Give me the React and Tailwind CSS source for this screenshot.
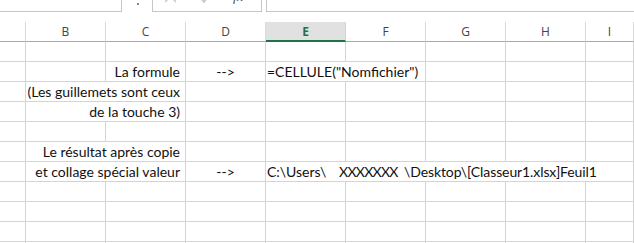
import React from "react";

const COLS = "grid grid-cols-[26px_80px_80px_80px_80px_80px_80px_80px_1fr]";
const LETTERS = ["", "B", "C", "D", "E", "F", "G", "H", "I"];

function Cell({ span = 1, align = "left", children }) {
  const spanCls =
    span === 2 ? "col-span-2" : span === 5 ? "col-span-5" : span === 3 ? "col-span-3" : "";
  const alignCls =
    align === "right" ? "text-right pr-[5px]" : align === "center" ? "text-center" : "text-left pl-[1px]";
  return (
    <div
      className={`${spanCls} ${alignCls} h-[20px] border-r border-b border-[#d4d4d4] text-[14px] leading-[19px] text-[#111] whitespace-nowrap overflow-visible`}
    >
      {children}
    </div>
  );
}

function EmptyRow() {
  return (
    <div className={COLS}>
      {LETTERS.map((l, i) => (
        <Cell key={i} />
      ))}
    </div>
  );
}

export default function App() {
  return (
    <div className="w-[634px] h-[243px] overflow-hidden bg-white font-['Lato','Liberation_Sans',sans-serif]">
      {/* formula bar remnants */}
      <div className="h-[22px] flex items-start">
        <div className="w-[122px] h-[12px] border-r border-b border-[#c6c6c6]" />
        <div className="w-[15px]" />
        <div className="w-[2px] h-[2px] mt-[3px] bg-[#8a8a8a]" />
        <div className="w-[13px]" />
        <div className="w-[110px] h-[12px] border-l border-r border-b border-[#c6c6c6] flex items-start overflow-hidden">
          <svg width="12" height="11" viewBox="0 0 12 11" className="ml-[12px]">
            <path d="M0 -9 L11 2 M11 -9 L0 2" stroke="#c4c4c4" strokeWidth="1.4" fill="none" />
          </svg>
          <svg width="12" height="11" viewBox="0 0 12 11" className="ml-[22px]">
            <path d="M-2 -6 L5 2 L14 -10" stroke="#c4c4c4" strokeWidth="1.6" fill="none" />
          </svg>
          <div className="ml-[22px] h-[11px] overflow-hidden">
            <div className="mt-[-11px] font-['Liberation_Serif',serif] italic text-[14px] leading-[16px] text-[#555]">
              fx
            </div>
          </div>
        </div>
        <div className="w-[4px]" />
        <div className="flex-1 h-[12px] border-l border-b border-[#c6c6c6]" />
      </div>

      {/* column headers */}
      <div className={COLS}>
        {LETTERS.map((l, i) =>
          l === "E" ? (
            <div
              key={i}
              className="h-[20px] bg-[#e1e1e1] border-b-2 border-b-[#217346] border-r border-r-[#d4d4d4] text-center text-[12px] leading-[19px] font-bold text-[#217346] font-['Open_Sans',sans-serif]"
            >
              E
            </div>
          ) : (
            <div
              key={i}
              className="h-[20px] border-b border-b-[#ababab] border-r border-r-[#dadada] text-center text-[12px] leading-[19px] text-[#444] font-['Open_Sans',sans-serif]"
            >
              {l}
            </div>
          )
        )}
      </div>

      {/* row 1 */}
      <EmptyRow />

      {/* row 2 */}
      <div className={COLS}>
        <Cell />
        <Cell />
        <Cell align="right">La formule</Cell>
        <Cell align="center">--&gt;</Cell>
        <Cell span={2}>=CELLULE("Nomfichier")</Cell>
        <Cell />
        <Cell />
        <Cell />
      </div>

      {/* row 3 */}
      <div className={COLS}>
        <Cell />
        <Cell span={2} align="right">(Les guillemets sont ceux</Cell>
        <Cell />
        <Cell />
        <Cell />
        <Cell />
        <Cell />
        <Cell />
      </div>

      {/* row 4 */}
      <div className={COLS}>
        <Cell />
        <Cell span={2} align="right">de la touche 3)</Cell>
        <Cell />
        <Cell />
        <Cell />
        <Cell />
        <Cell />
        <Cell />
      </div>

      {/* row 5 */}
      <EmptyRow />

      {/* row 6 */}
      <div className={COLS}>
        <Cell />
        <Cell span={2} align="right">Le résultat après copie</Cell>
        <Cell />
        <Cell />
        <Cell />
        <Cell />
        <Cell />
        <Cell />
      </div>

      {/* row 7 */}
      <div className={COLS}>
        <Cell />
        <Cell span={2} align="right">et collage spécial valeur</Cell>
        <Cell align="center">--&gt;</Cell>
        <Cell span={5}>
          <div className="flex">
            <span className="w-[72px] shrink-0">C:\Users\</span>
            <span className="w-[65px] shrink-0 tracking-[-0.7px]">XXXXXXX</span>
            <span className="tracking-[-0.1px]">\Desktop\[Classeur1.xlsx]Feuil1</span>
          </div>
        </Cell>
      </div>

      <EmptyRow />
      <EmptyRow />
      <EmptyRow />
      <EmptyRow />
    </div>
  );
}
